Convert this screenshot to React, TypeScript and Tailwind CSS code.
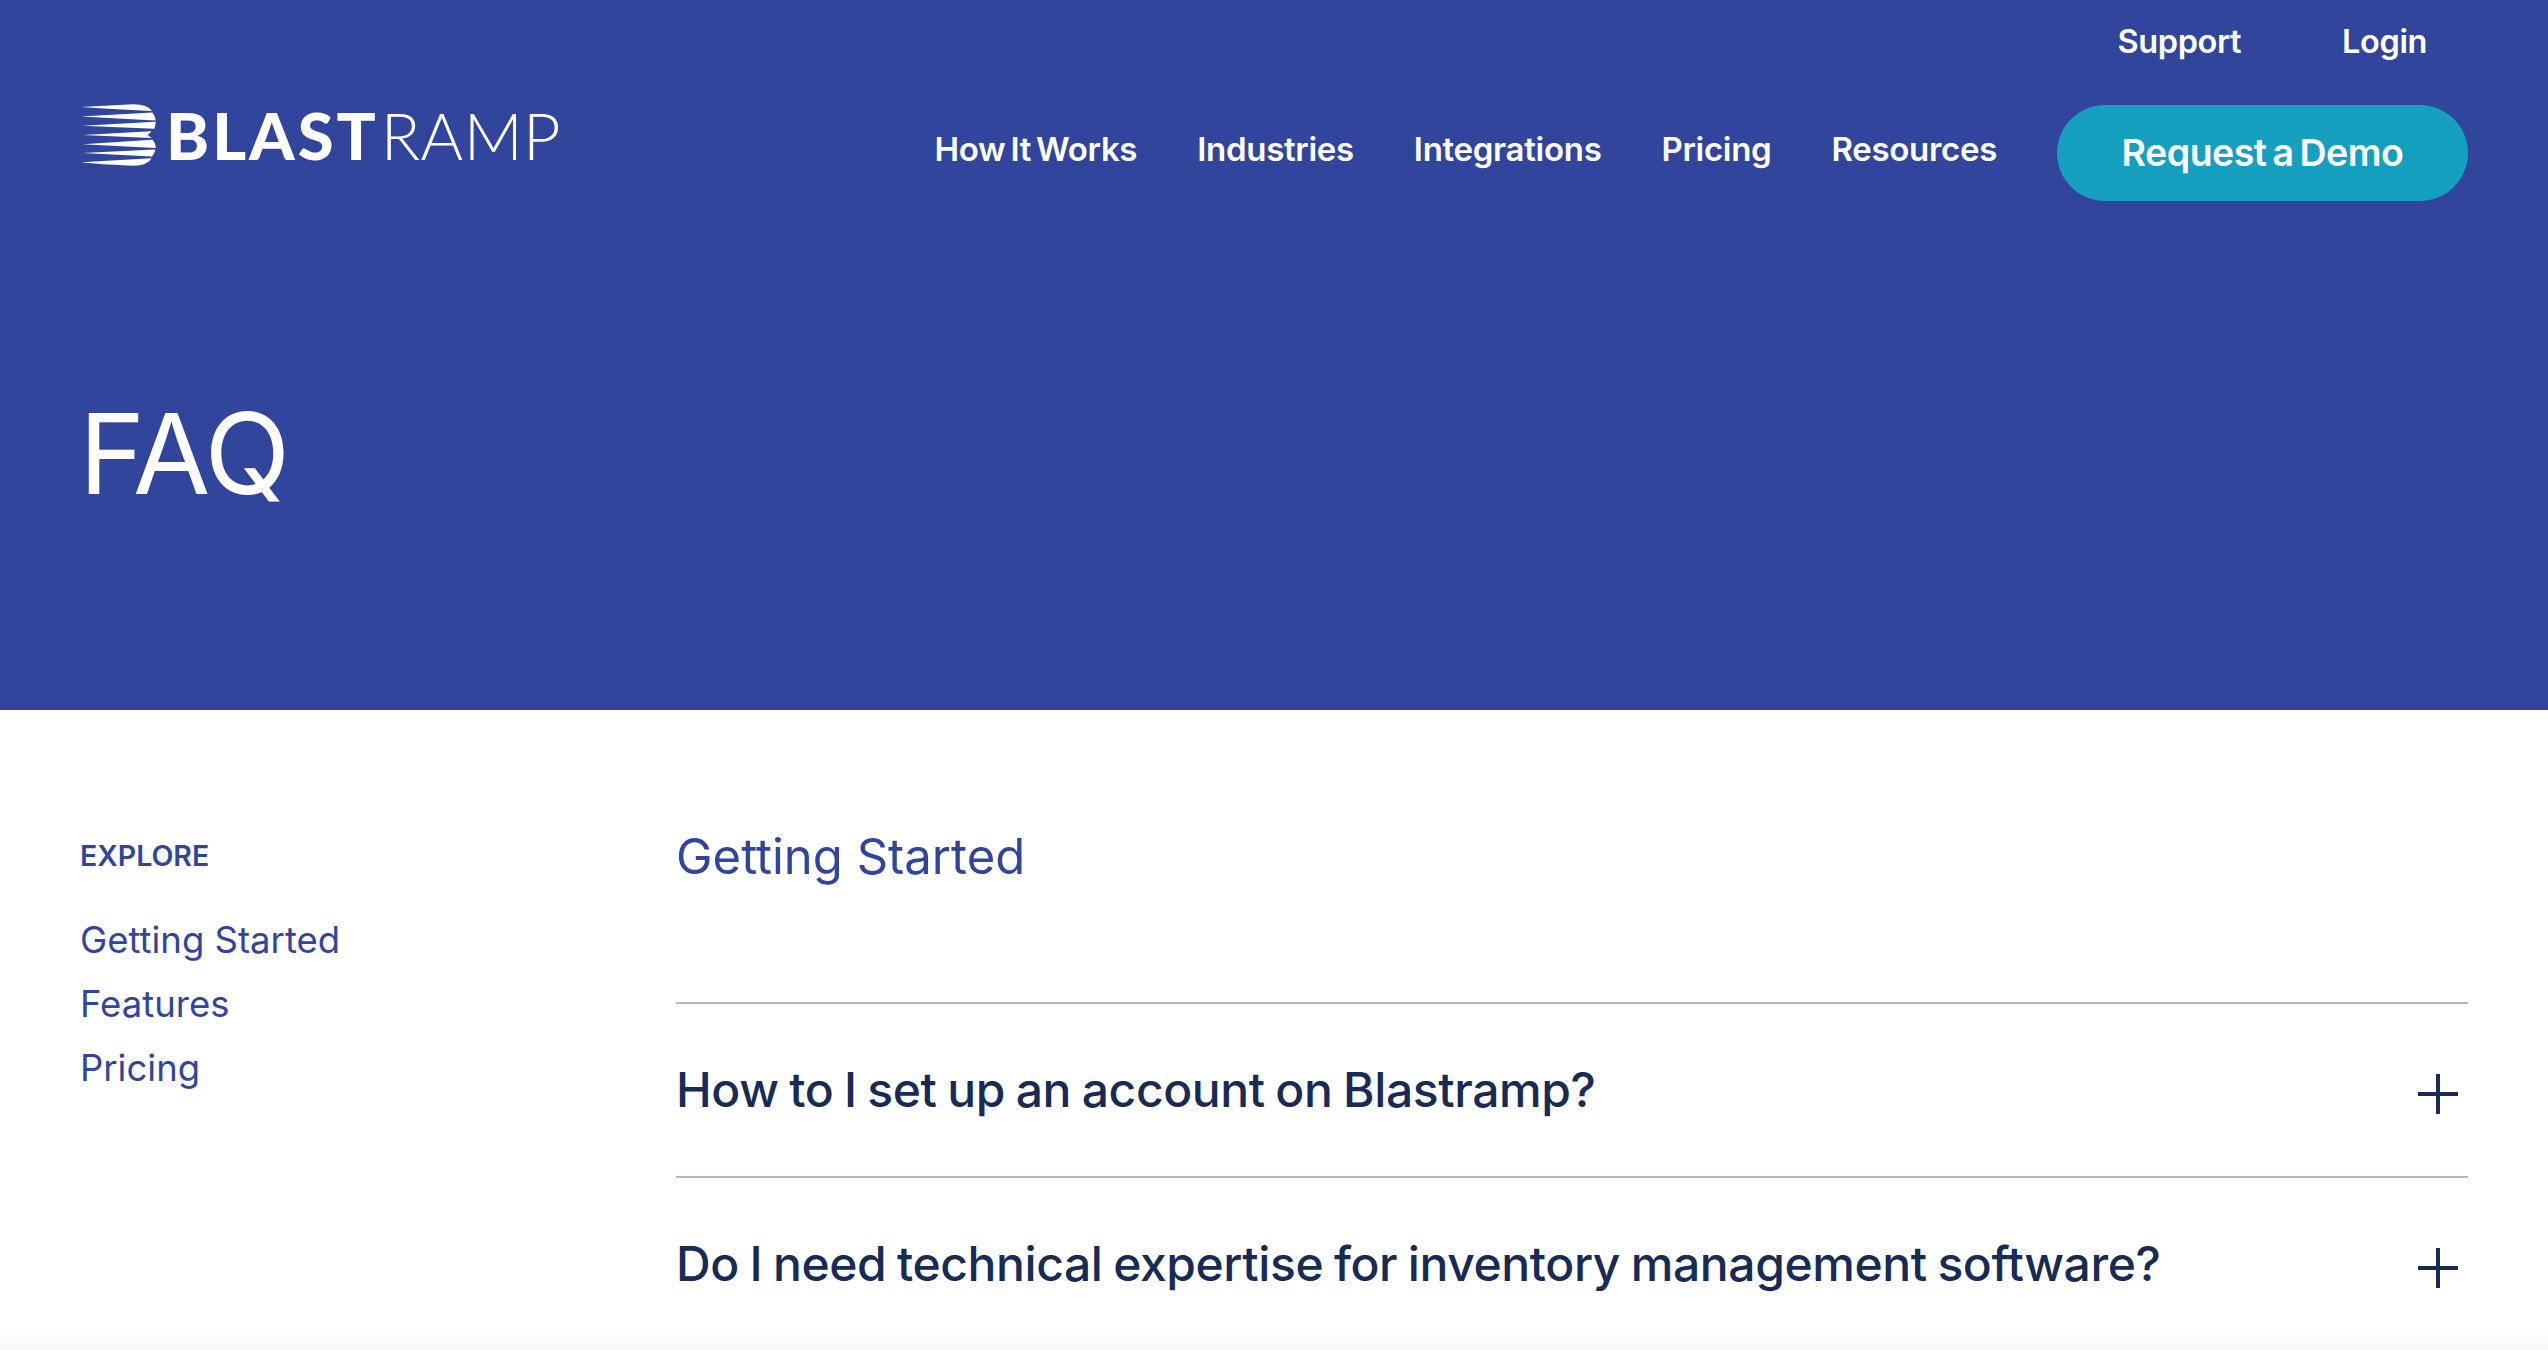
import React from 'react';

const navLinks = ['How It Works', 'Industries', 'Integrations', 'Pricing', 'Resources'];
const sideLinks = ['Getting Started', 'Features', 'Pricing'];
const questions = [
  'How to I set up an account on Blastramp?',
  'Do I need technical expertise for inventory management software?',
];

const LogoMark = () => (
  <svg viewBox="30 30 232 192" className="w-[77px] h-[64px] shrink-0" fill="#ffffff">
    <path d="M33 42 L190 33 Q235 33 247 54 L100 46 Z" />
    <path d="M33 70 L248 58 Q257 68 258 82 Z" />
    <path d="M38 98 L258 86 Q258 96 254 107 Z" />
    <path d="M38 126 L246 115 L234 126 L246 135 Z" />
    <path d="M38 154 L248 140 Q258 150 258 165 Z" />
    <path d="M38 180 L257 170 Q255 182 247 191 Z" />
    <path d="M33 208 L246 196 Q235 217 190 219 L100 214 Z" />
  </svg>
);

const Plus = () => (
  <svg viewBox="0 0 40 40" className="mt-[8px] w-[40px] h-[40px] shrink-0" fill="#182b55">
    <rect x="18" y="0" width="4" height="40" />
    <rect x="0" y="18" width="40" height="4" />
  </svg>
);

export default function App() {
  return (
    <div className="relative h-[1350px] overflow-hidden bg-white font-['Inter',sans-serif]">
      <header className="h-[710px] bg-[#31459c] px-[80px] text-white">
        <div className="flex h-[84px] items-center justify-end gap-[101px] pr-[41px] text-[32.5px] font-semibold tracking-[-0.4px]">
          <a href="#">Support</a>
          <a href="#">Login</a>
        </div>
        <div className="mt-[21px] flex items-start justify-between">
          <div className="-mt-[2px] flex items-center gap-[9px]">
            <LogoMark />
            <span className="text-[65px] leading-[64px] font-['Lato',sans-serif]">
              <span className="font-black tracking-[3px]">BLAST</span>
              <span className="ml-[2px] font-light tracking-[0.4px]">RAMP</span>
            </span>
          </div>
          <nav className="flex items-center gap-[60px] text-[33px] font-semibold tracking-[-0.3px] [word-spacing:-3px]">
            {navLinks.map((l) => (
              <a key={l} href="#" className="-mt-[6px]">{l}</a>
            ))}
            <a href="#" className="flex h-[96px] w-[411px] items-center justify-center rounded-full bg-[#16a0c0] text-[37.5px] tracking-[-0.5px]">
              Request a Demo
            </a>
          </nav>
        </div>
        <h1 className="mt-[187px] -ml-[1px] text-[112px] leading-[130px] font-normal tracking-[-2px]">FAQ</h1>
      </header>

      <main className="flex px-[80px] pt-[120px]">
        <aside className="w-[596px] shrink-0 text-[#31459c]">
          <h4 className="text-[28.5px] leading-[52px] font-semibold">EXPLORE</h4>
          <ul className="mt-[26px] text-[36.5px] leading-[64px]">
            {sideLinks.map((l) => (
              <li key={l}><a href="#">{l}</a></li>
            ))}
          </ul>
        </aside>
        <section className="flex-1">
          <h2 className="text-[49px] leading-[54px] text-[#31459c]">Getting Started</h2>
          <div className="mt-[118px]">
            {questions.map((q) => (
              <div key={q} className="flex h-[174px] items-center justify-between border-t-2 border-[#b5b5c3] pr-[10px] text-[48px] font-medium tracking-[-0.4px] [word-spacing:-1.7px] text-[#182b55]">
                <span>{q}</span>
                <Plus />
              </div>
            ))}
          </div>
        </section>
      </main>

      {/* shadow of a bar just below the fold */}
      <div className="absolute inset-x-0 bottom-0 h-[24px] bg-gradient-to-b from-white to-[#f8f8f8]" />
    </div>
  );
}
